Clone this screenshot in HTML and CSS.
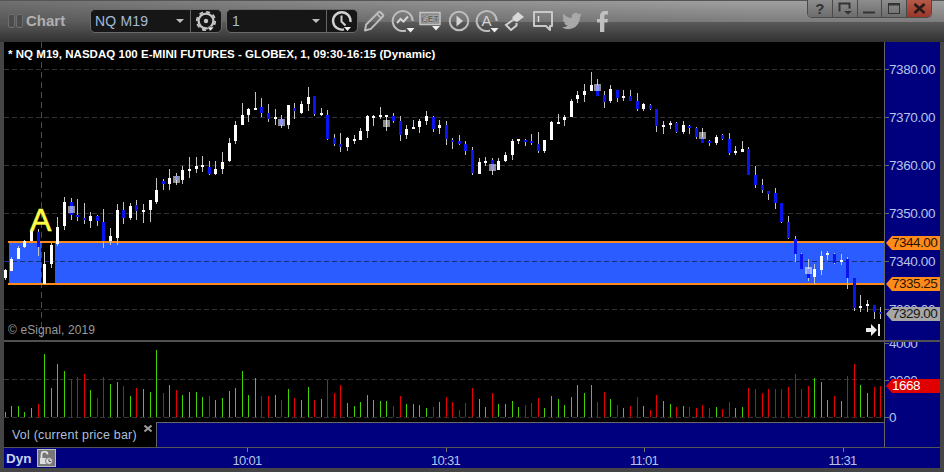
FILE: index.html
```html
<!DOCTYPE html>
<html lang="en">
<head>
<meta charset="utf-8">
<title>Chart</title>
<link rel="stylesheet" href="styles.css">
</head>
<body>
<div class="window">
  <header class="titlebar">
    <div class="brand">
      <span class="grip"><i></i><i></i></span>
      <span class="brand-name">Chart</span>
    </div>
    <div class="combo combo-symbol">
      <span class="combo-value">NQ M19</span>
      <span class="caret"></span>
      <span class="combo-tool">
        <svg width="22" height="22" viewBox="0 0 22 22"><circle cx="11" cy="11" r="7.4" fill="none" stroke="#c4c4c4" stroke-width="2.4"/><circle cx="11" cy="11" r="9.2" fill="none" stroke="#c4c4c4" stroke-width="1.8" stroke-dasharray="4 3.2"/><circle cx="11" cy="11" r="2.2" fill="#c4c4c4"/><path d="M12 17h7l-3.500 4z" fill="#eee" stroke="#222" stroke-width=".6"/></svg>
      </span>
    </div>
    <div class="combo combo-interval">
      <span class="combo-value">1</span>
      <span class="caret"></span>
      <span class="combo-tool">
        <svg width="22" height="22" viewBox="0 0 22 22"><path d="M13 19.300A8.700 8.700 0 1 1 19.400 12" fill="none" stroke="#d0d0d0" stroke-width="2.400"/><path d="M10.500 5.500v6l4 4" fill="none" stroke="#d0d0d0" stroke-width="2"/><path d="M13 17h7l-3.500 4z" fill="#eee"/></svg>
      </span>
    </div>
    <div class="tools">
      <svg width="22" height="22" viewBox="0 0 22 22"><path d="M2 20.500l1.200-6L15.500 2.200a1.500 1.500 0 0 1 2 0l2.300 2.300a1.500 1.500 0 0 1 0 2L7.800 18.900z" fill="none" stroke="#bdbdbd" stroke-width="2" stroke-linejoin="round"/><path d="M14 4l3.900 3.900" stroke="#bdbdbd" stroke-width="1.500"/></svg>
      <svg width="24" height="24" viewBox="0 0 24 24"><path d="M15 21.500A10 10 0 1 1 21.700 12" fill="none" stroke="#bdbdbd" stroke-width="2"/><path d="M6 14l3.500-4 3 2.500 4.500-5" fill="none" stroke="#d4d4d4" stroke-width="2"/><path d="M15.500 19h8l-4 4.500z" fill="#eee"/></svg>
      <svg width="23" height="24" viewBox="0 0 23 24"><rect x="1" y="3.500" width="20" height="12" fill="#8c8c8c" stroke="#c4c4c4" stroke-width="1.500"/><text class="get" x="11" y="13.200">GET</text><path d="M13 17h8l-4 4.500z" fill="#eee"/></svg>
      <svg width="22" height="22" viewBox="0 0 22 22"><circle cx="11" cy="11" r="9.300" fill="none" stroke="#bdbdbd" stroke-width="2"/><path d="M8.500 5.500l6.500 5.500-6.500 5.500z" fill="#d4d4d4"/></svg>
      <svg width="24" height="24" viewBox="0 0 24 24"><path d="M15 21.500A10 10 0 1 1 21.700 12" fill="none" stroke="#bdbdbd" stroke-width="2"/><text class="acirc" x="11.500" y="17">A</text><path d="M15.500 19h8l-4 4.500z" fill="#eee"/></svg>
      <svg width="22" height="22" viewBox="0 0 22 22"><path d="M9 10L2 15l5 5 5.500-4.500V13" fill="none" stroke="#d0d0d0" stroke-width="2"/><path d="M13 12l7-5-6-5-5.500 5v3z" fill="#d8d8d8"/></svg>
      <svg width="22" height="22" viewBox="0 0 22 22"><path d="M2 2h18v14h-2v4l-4-4H2z" fill="none" stroke="#c8c8c8" stroke-width="2" stroke-linejoin="round"/><path d="M6.500 6v6" stroke="#e0e0e0" stroke-width="1.500"/></svg>
      <svg width="22" height="20" viewBox="0 0 24 24"><path d="M23.953 4.570a10 10 0 0 1-2.825.775 4.958 4.958 0 0 0 2.163-2.723c-.951.555-2.005.959-3.127 1.184a4.920 4.920 0 0 0-8.384 4.482C7.690 8.095 4.067 6.130 1.640 3.162a4.822 4.822 0 0 0-.666 2.475c0 1.710.870 3.213 2.188 4.096a4.904 4.904 0 0 1-2.228-.616v.060a4.923 4.923 0 0 0 3.946 4.827 4.996 4.996 0 0 1-2.212.085 4.936 4.936 0 0 0 4.604 3.417 9.867 9.867 0 0 1-6.102 2.105c-.390 0-.779-.023-1.170-.067a13.995 13.995 0 0 0 7.557 2.209c9.053 0 13.998-7.496 13.998-13.985 0-.210 0-.420-.015-.630A9.935 9.935 0 0 0 24 4.590z" fill="#a8a8a8"/></svg>
      <svg width="11" height="21" viewBox="0 0 11 21"><path d="M3 21V11.500H0V8h3V5.500C3 2 5 0 8 0h3v3.500H9C7.800 3.500 7.300 4 7.300 5.300V8H11l-.6 3.500H7.300V21z" fill="#c0c0c0"/></svg>
    </div>
    <div class="winbtns">
      <span class="winbtn winbtn-help">?</span>
      <span class="winbtn"><svg width="14" height="13" viewBox="0 0 14 13"><path d="M1.500 9.500V1.500h10v5" fill="none" stroke="#333" stroke-width="2"/><path d="M6 9h8l-4 3.500z" fill="#333"/></svg></span>
      <span class="winbtn"><svg width="12" height="13" viewBox="0 0 12 13"><path d="M0 10.500h12" stroke="#333" stroke-width="2"/></svg></span>
      <span class="winbtn"><svg width="12" height="11" viewBox="0 0 12 11"><rect x=".5" y=".5" width="11" height="10" fill="none" stroke="#333"/><path d="M0 1.500h12" stroke="#333" stroke-width="2"/></svg></span>
      <span class="winbtn winbtn-close"><svg width="13" height="11" viewBox="0 0 13 11"><path d="M1.500 1l10 9M11.500 1l-10 9" stroke="#2a1a18" stroke-width="2.800"/></svg></span>
    </div>
  </header>

  <main class="body">
    <section class="pane-row price-row">
      <div class="plot">
        <svg id="price-svg" class="plot-svg" width="880" height="298" viewBox="4 42 880 298"></svg>
        <div class="chart-title">* NQ M19, NASDAQ 100 E-MINI FUTURES - GLOBEX, 1, 09:30-16:15 (Dynamic)</div>
        <div class="marker-a">A</div>
        <div class="copyright">© eSignal, 2019</div>
        <svg class="goto-end" width="14" height="12" viewBox="0 0 14 12"><path d="M0 4h5V0l6 6-6 6V8H0z" fill="#eee"/><rect x="12" y="0" width="2" height="12" fill="#eee"/></svg>
      </div>
      <div class="axis price-axis">
        <div class="tick">7380.00</div>
        <div class="tick">7370.00</div>
        <div class="tick">7360.00</div>
        <div class="tick">7350.00</div>
        <div class="tick">7340.00</div>
        <div class="tick">7330.00</div>
        <div class="tag tag-orange tag-high">7344.00</div>
        <div class="tag tag-orange tag-low">7335.25</div>
        <div class="tag tag-gray tag-last">7329.00</div>
      </div>
    </section>
    <div class="divider"></div>
    <section class="pane-row volume-row">
      <div class="plot volume-plot">
        <svg id="volume-svg" class="plot-svg" width="880" height="80" viewBox="4 342 880 80"></svg>
        <div class="legend">
          <div class="legend-label">
            <span class="legend-text">Vol (current price bar)</span>
            <svg class="legend-x" width="8" height="7" viewBox="0 0 8 7"><path d="M.5 .5l7 6M7.500 .5l-7 6" stroke="#999" stroke-width="2"/></svg>
          </div>
          <div class="legend-box"></div>
        </div>
      </div>
      <div class="axis volume-axis">
        <div class="vtick">4000</div>
        <div class="vtick">2000</div>
        <div class="vtick">0</div>
        <div class="tag tag-red">1668</div>
      </div>
    </section>
    <footer class="xaxis">
      <div class="xaxis-left">
        <span class="dyn">Dyn</span>
        <span class="lock"><svg width="14" height="14" viewBox="0 0 14 14"><path d="M2.500 7V3.500a3 3 0 0 1 6 0" fill="none" stroke="#ddd" stroke-width="1.800"/><rect x="1" y="7" width="9" height="6" fill="#ddd"/><circle cx="10" cy="10" r="3.500" fill="#ddd" stroke="#777"/><path d="M10 8v2.500h2" fill="none" stroke="#555"/></svg></span>
      </div>
      <div class="time">10:01</div>
      <div class="time">10:31</div>
      <div class="time">11:01</div>
      <div class="time">11:31</div>
    </footer>
  </main>
</div>
<script src="chart.js"></script>
</body>
</html>
```
FILE: styles.css
```css
* { box-sizing: border-box; }
html, body { margin: 0; padding: 0; background: #444; }
body { width: 944px; height: 472px; overflow: hidden; font-family: "Liberation Sans", Arial, sans-serif; }

.window { width: 944px; height: 472px; display: flex; flex-direction: column; background: #454545; }

/* title bar */
.titlebar {
  height: 42px; display: flex; align-items: flex-start; position: relative; flex: none;
  background:
    linear-gradient(180deg, #5a5a5a 0, #2f2f2f 21px) 0 21px / 100% 21px no-repeat,
    linear-gradient(90deg, rgba(0,0,0,.3) 0, rgba(0,0,0,.1) 45%, rgba(0,0,0,0) 80%) 0 0 / 100% 21px no-repeat,
    linear-gradient(180deg, #a0a0a0 0, #7c7c7c 21px) 0 0 / 100% 21px no-repeat;
  border-top: 1px solid #555;
}
.brand { width: 90px; height: 41px; display: flex; align-items: center; padding: 0 0 2px 8px; gap: 3px; flex: none; }
.grip { display: flex; gap: 1px; }
.grip i { width: 7px; height: 14px; background: #4c4c4c; border: 1px solid #6e6e6e; border-radius: 2px; }
.brand-name { font-size: 15px; font-weight: 700; color: #b0b0b0; }
.combo {
  width: 132px; height: 24px; margin-top: 8px; flex: none; display: flex; align-items: center;
  background: #161616; border: 1px solid #6a6a6a; border-radius: 5px; position: relative;
}
.combo-symbol { margin-right: 4px; }
.combo-value { font-size: 14px; color: #a4bcd8; padding-left: 4px; letter-spacing: .2px; flex: 1; }
.combo-interval .combo-value { padding-left: 5px; }
.caret { width: 0; height: 0; border: 4px solid transparent; border-top: 4px solid #bdbdbd; border-bottom: 0; margin-right: 6px; }
.combo-tool { width: 31px; height: 22px; border-left: 1px solid #666; display: flex; align-items: center; justify-content: center; flex: none; }
.tools {
  display: grid; grid-template-columns: 28px 28px 29px 27px 29px 28px 29px 36px 11px; align-items: center;
  height: 42px; padding: 0 0 2px 5px; flex: none;
}
.get { font: 700 8.5px "Liberation Sans", sans-serif; fill: #333; text-anchor: middle; stroke: #ddd; stroke-width: .3px; }
.acirc { font: 400 15px "Liberation Sans", sans-serif; fill: #d4d4d4; text-anchor: middle; }
.winbtns {
  position: absolute; top: -1px; left: 807px; width: 125px; height: 18px; display: flex;
  border: 1px solid #4a4a4a; border-top: 0; border-radius: 0 0 5px 5px; overflow: hidden;
}
.winbtn {
  flex: 1; display: flex; align-items: center; justify-content: center;
  background: linear-gradient(180deg, #8e8e8e, #6c6c6c); border-right: 1px solid #4a4a4a;
}
.winbtn:last-child { border-right: 0; }
.winbtn-help { font-size: 15px; font-weight: 700; color: #333; }
.winbtn-close { background: linear-gradient(180deg, #b65a48, #98372a); }

/* panes */
.body { flex: 1; display: flex; flex-direction: column; padding: 0 4px 4px; min-height: 0; }
.pane-row { display: flex; flex: none; }
.price-row { height: 298px; }
.volume-row { height: 105px; }
.plot { width: 880px; flex: none; background: #000; position: relative; overflow: hidden; }
.plot-svg { display: block; }
.axis {
  flex: 1; background: #00007f; border-left: 1px solid #666; position: relative; overflow: hidden;
  color: #b7c3e6; font-size: 13.5px; letter-spacing: -.4px;
}
.divider { height: 2px; background: #505050; flex: none; }

.price-axis { padding-top: 4px; }
.tick { height: 48px; line-height: 48px; padding-left: 4px; position: relative; }
.vtick { height: 37px; line-height: 37px; padding-left: 4px; position: relative; }
.vtick:first-child { margin-top: -17px; }
.tick::before, .vtick::before { content: ""; position: absolute; left: 0; top: 50%; margin-top: -1px; width: 4px; height: 1px; background: #666; }

.tag {
  position: absolute; left: 1px; width: 54px; height: 14px; line-height: 14px; padding-left: 6px; letter-spacing: -.5px;
  clip-path: polygon(0 50%, 6px 0, 100% 0, 100% 100%, 6px 100%);
}
.tag-orange { background: #ff8c1a; color: #2a1500; }
.tag-gray { background: #a6a6a6; color: #161616; }
.tag-red { background: #e00000; color: #fff; top: 37px; }
.tag-high { top: 194px; }
.tag-low { top: 235px; }
.tag-last { top: 265px; }

/* overlay text on the plot */
.chart-title { position: absolute; left: 4px; top: 6px; font-size: 11.5px; letter-spacing: .035px; font-weight: 700; color: #fff; white-space: nowrap; }
.marker-a { position: absolute; left: 26px; top: 160px; font-size: 32px; line-height: 37px; color: #ffff45; -webkit-text-stroke: .6px #ffff45; }
.copyright { position: absolute; left: 4px; top: 281px; font-size: 12px; letter-spacing: .1px; color: #9a9a9a; }
.goto-end { position: absolute; left: 862px; top: 282px; }

/* legend under the volume pane */
.volume-plot { display: flex; flex-direction: column; }
.legend { height: 25px; display: flex; flex: none; }
.legend-label { width: 152px; flex: none; display: flex; align-items: flex-start; padding-left: 8px; position: relative; }
.legend-text { font-size: 12.5px; color: #aebfd8; letter-spacing: .2px; margin-top: 6px; }
.legend-x { position: absolute; left: 140px; top: 3px; }
.legend-box { flex: 1; background: #00007f; border-top: 1px solid #666; border-left: 1px solid #666; }

/* bottom bar */
.xaxis { height: 21px; flex: none; display: flex; background: #00007f; border-top: 1px solid #555; }
.xaxis-left { width: 143.75px; flex: none; display: flex; align-items: center; gap: 5px; padding-left: 2px; }
.dyn { font-size: 13.5px; font-weight: 700; color: #c8d4ec; }
.lock { width: 19px; height: 18px; background: #777; border: 1px solid #bbb; display: flex; align-items: center; justify-content: center; }
.time { width: 198.5px; flex: none; text-align: center; font-size: 13px; letter-spacing: -.7px; color: #b7c3e6; line-height: 25px; position: relative; }
.time::before { content: ""; position: absolute; left: 50%; top: 0; width: 1px; height: 4px; background: #777; }
```
FILE: chart.js
```js
// [x, wickTop, wickBottom, bodyTop, bodyBottom, colour, highlightTop]
var bars = [
[5,269,280,270,278,'w'],[11,257,271,259,271,'w'],[18,246,259,248,259,'w'],[24,240,248,241,247,'w'],[31,231,241,231,241,'w'],
[38,229,256,232,247,'b'],[44,252,284,264,284,'w'],[51,243,268,245,264,'w'],[57,217,246,227,244,'w'],[64,197,230,202,226,'w'],
[71,198,220,202,215,'b',206],[77,199,221,215,217,'b'],[84,203,224,218,220,'b'],[90,212,228,216,221,'w'],[97,215,226,216,221,'b'],
[103,209,248,222,241,'b'],[110,228,245,236,241,'w'],[117,204,245,210,238,'w'],[123,202,224,210,218,'b'],[130,203,220,206,218,'w'],
[136,200,220,205,211,'b'],[143,204,223,210,212,'w'],[150,200,222,200,210,'w'],[156,178,204,190,202,'w'],[163,179,190,181,184,'b'],
[169,169,190,178,184,'w'],[176,173,185,176,180,'b',176],[182,166,184,170,180,'w'],[189,157,178,169,171,'w'],[196,157,173,166,169,'w'],
[202,156,172,165,167,'w'],[209,161,175,167,174,'b'],[215,161,175,169,174,'w'],[222,152,174,162,169,'w'],[229,138,162,143,161,'w'],
[235,121,144,125,141,'w'],[242,103,125,115,125,'w'],[248,108,122,109,115,'w'],[255,92,110,108,110,'w'],[261,98,117,107,113,'b'],
[268,104,122,113,119,'b'],[275,109,125,117,119,'w'],[281,115,128,119,125,'b',119],[288,105,129,105,125,'w'],[294,103,119,108,111,'b'],
[301,101,114,104,113,'w'],[308,87,111,97,104,'w'],[314,96,116,96,114,'b'],[321,108,116,113,115,'w'],[327,110,140,115,139,'b'],
[334,134,146,138,144,'b'],[340,133,152,144,147,'b'],[347,137,151,138,147,'w'],[354,135,144,139,141,'w'],[360,128,140,131,140,'w'],
[367,115,138,116,131,'w'],[373,115,126,116,118,'w'],[380,107,119,115,117,'w'],[386,115,131,115,117,'w',120],[393,113,123,116,121,'b'],
[400,116,141,121,135,'b'],[406,125,139,129,135,'w'],[413,120,129,127,129,'w'],[419,119,133,121,127,'w'],[426,111,125,116,121,'w'],
[433,116,132,117,129,'b'],[439,120,134,125,128,'w'],[446,121,145,125,139,'b'],[452,138,149,140,142,'b'],[459,135,145,141,144,'b'],
[465,141,155,144,151,'b'],[472,147,175,150,173,'b'],[479,158,174,162,174,'w'],[485,157,166,161,163,'w'],[492,158,175,160,170,'b',164],
[498,158,170,161,170,'w'],[505,152,162,155,161,'w'],[512,139,160,141,155,'w'],[518,139,144,139,141,'w'],[525,139,146,140,142,'b'],
[531,134,145,141,143,'b'],[538,132,153,144,151,'b'],[544,140,153,140,151,'w'],[551,121,140,122,140,'w'],[558,114,124,122,124,'w'],
[564,115,126,117,120,'w'],[571,99,117,101,117,'w'],[577,91,103,95,99,'w'],[584,84,102,91,95,'w'],[591,72,91,85,91,'w'],
[597,79,96,85,96,'b',84],[604,91,108,95,102,'b'],[610,85,103,89,101,'w'],[617,90,102,90,98,'b'],[623,90,101,96,98,'w'],
[630,90,101,96,101,'b'],[637,93,111,101,109,'b'],[643,103,111,104,109,'w'],[650,104,110,105,109,'b'],[656,109,132,109,126,'b'],
[663,121,134,125,127,'w'],[670,121,129,123,125,'w'],[676,122,133,123,132,'b'],[683,121,134,125,132,'w'],[689,125,134,126,128,'b'],
[696,127,139,128,137,'b'],[702,128,143,137,143,'b',132],[709,140,146,141,143,'b'],[716,135,145,137,143,'w'],[722,134,140,135,139,'b'],
[729,133,155,139,153,'b'],[735,146,155,151,153,'w'],[742,141,152,149,152,'w'],[748,147,175,149,175,'b'],[755,166,188,175,185,'b'],
[762,179,193,185,190,'b'],[768,191,200,191,194,'b'],[775,188,209,193,203,'b'],[781,203,223,203,222,'b'],[788,216,239,222,238,'b'],
[795,236,262,239,254,'b'],[801,253,269,254,269,'b'],[808,259,281,269,278,'b',267],[814,264,284,269,277,'w'],[821,251,275,256,270,'w'],
[827,251,260,253,255,'w'],[834,253,264,254,263,'b'],[841,254,265,260,262,'w'],[847,257,289,259,278,'b'],[854,278,311,278,308,'b'],
[860,295,312,306,308,'w'],[867,300,312,304,306,'w'],[874,305,319,305,312,'b'],[880,307,319,312,314,'b']
];

// top of each volume bar, in px below y=350 times three; 'g' or 'r'
var vols = "186g 168g 168g 186g 174g 162r 12g 114g 42g 63g 87r 81r 72r 120g 144r 81r 102g 96g 108r 138g 114r 117g 126g 0g 129r 105g 120r 135g 126g 126g 141g 138r 150g 144g 123g 114g 63g 135g 84g 138r 138r 135g 150r 117g 144r 150g 111g 150r 147g 90r 129r 105r 159g 168g 156g 135g 150g 153g 153g 168r 138r 162g 162g 165g 174g 171r 156g 141r 156r 180r 159r 114r 147g 171g 129r 162g 162g 153g 171g 165r 159r 144r 174g 138g 147g 165g 141g 105g 129g 105g 156r 126r 147g 165r 174g 168r 141r 168g 180r 135r 153g 162g 171r 168g 171r 174r 165r 174r 171g 177r 156r 174g 171g 114r 117r 129r 117r 117r 117r 111r 72r 117r 108r 84g 96g 150g 138r 153g 78r 42r 105g 129g 111r 108r".split(" ");

var NS = "http://www.w3.org/2000/svg";
function add(parent, name, attrs) {
  var el = document.createElementNS(NS, name);
  for (var k in attrs) el.setAttribute(k, attrs[k]);
  parent.appendChild(el);
  return el;
}
function rect(p, x, y, w, h, fill, opacity) {
  var a = { x: x, y: y, width: w, height: h, fill: fill };
  if (opacity) a.opacity = opacity;
  return add(p, "rect", a);
}
function hline(p, y, stroke) {
  add(p, "line", { x1: 4, x2: 884, y1: y + 0.5, y2: y + 0.5, stroke: stroke, "stroke-dasharray": "5 3" });
}

var price = document.getElementById("price-svg");
// shaded band, with the gap at the start of the session
rect(price, 9, 243, 32, 40, "#2a5cff");
rect(price, 55, 243, 829, 40, "#2a5cff");
[69, 117, 165, 213, 309].forEach(function (y) { hline(price, y, "#333"); });
hline(price, 261, "#16307f");
add(price, "line", { x1: 41.5, x2: 41.5, y1: 42, y2: 340, stroke: "#4a4a4a", "stroke-dasharray": "6 4" });
rect(price, 8, 241, 876, 2, "#ff8c1a");
rect(price, 8, 283, 876, 2, "#ff8c1a");

bars.forEach(function (b) {
  rect(price, b[0], b[1], 1, b[2] - b[1], "#c4c4c4");
  rect(price, b[0] - 1, b[3], 3, b[4] - b[3], b[5] === "w" ? "#fff" : "#0a14f0");
  if (b[6]) rect(price, b[0] - 3, b[6], 7, 7, "#ffffff", ".55");
});

var volume = document.getElementById("volume-svg");
[379, 417].forEach(function (y) { hline(volume, y, "#333"); });
vols.forEach(function (v, i) {
  var top = 350 + parseInt(v, 10) / 3;
  var col = v.slice(-1) === "g" ? "#3fd400" : "#e80000";
  rect(volume, bars[i][0], top, 1, 417 - top, col);
});
```
